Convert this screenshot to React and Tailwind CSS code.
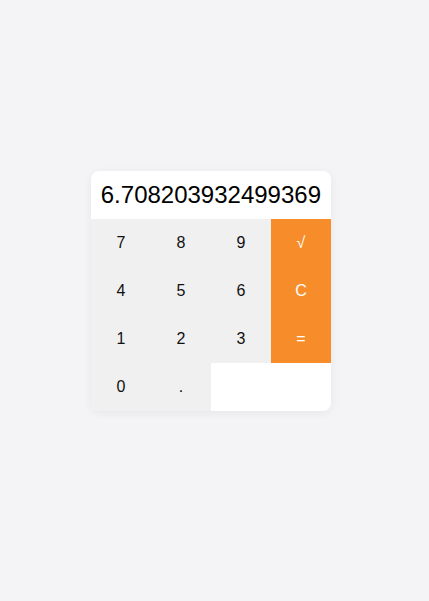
import React, { useState } from "react";

const keys = [
  { label: "7" }, { label: "8" }, { label: "9" }, { label: "√", op: true },
  { label: "4" }, { label: "5" }, { label: "6" }, { label: "C", op: true },
  { label: "1" }, { label: "2" }, { label: "3" }, { label: "=", op: true },
  { label: "0" }, { label: "." },
];

export default function App() {
  const [display] = useState("6.708203932499369");

  return (
    <div
      className="min-h-[601px] w-full bg-[#f4f3f6] flex pl-[91px] pt-[171px]"
      style={{ fontFamily: "'Liberation Sans', Arial, sans-serif" }}
    >
      <div className="w-[240px] h-[240px] bg-white rounded-lg shadow-[0_2px_10px_rgba(0,0,0,0.06)] flex flex-col">
        <div className="h-[48px] flex items-center justify-end pr-[10px] text-[24px] text-black">
          {display}
        </div>
        <div className="grid grid-cols-4">
          {keys.map((k) => (
            <button
              key={k.label}
              className={
                k.op
                  ? "h-[48px] bg-[#f68d2a] text-white text-base"
                  : "h-[48px] bg-[#f0f0f0] text-[#111] text-base"
              }
            >
              {k.label}
            </button>
          ))}
        </div>
      </div>
    </div>
  );
}
